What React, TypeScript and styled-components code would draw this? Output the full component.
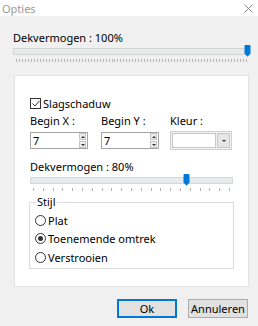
import styled, { createGlobalStyle } from "styled-components";

const GlobalStyle = createGlobalStyle`
  html, body {
    margin: 0;
    padding: 0;
    background: #f0f0f0;
  }
  body {
    font-family: "Noto Sans", "Open Sans", sans-serif;
    font-size: 11px;
    color: #000;
  }
`;

const Window = styled.div`
  width: 258px;
  height: 326px;
  display: flex;
  flex-direction: column;
  background: #f0f0f0;
  overflow: hidden;
`;

const TitleBar = styled.div`
  height: 16px;
  flex-shrink: 0;
  background: #fff;
  display: flex;
  align-items: center;
  justify-content: space-between;
  padding: 0 5px 0 2px;
  color: #9a9a9a;
  font-size: 11px;
`;

const Body = styled.div`
  display: flex;
  flex-direction: column;
  flex-shrink: 0;
  padding: 0 8px 0 13px;
`;

const Label = styled.div<{ $top?: number }>`
  margin-top: ${(p) => p.$top ?? 0}px;
  line-height: 15px;
  white-space: nowrap;
`;

const SliderWrap = styled.div`
  position: relative;
  display: flex;
  flex-direction: column;
  padding-top: 3px;
`;

const Track = styled.div`
  height: 5px;
  background: #e7eaea;
  border: 1px solid #d6d6d6;
`;

const Thumb = styled.svg`
  position: absolute;
  top: 0;
  width: 7px;
  height: 12px;
`;

const Ticks = styled.div`
  display: flex;
  justify-content: space-between;
  margin: 4px 3px 0;
  height: 3px;
`;

const Tick = styled.span`
  width: 1px;
  height: 3px;
  background: #b4b4b4;
`;

function Slider({ value, ticks }: { value: number; ticks: number }) {
  return (
    <SliderWrap>
      <Track />
      <Thumb
        viewBox="0 0 7 12"
        style={{ left: `calc(${value * 100}% - ${value * 6}px)` }}
      >
        <path d="M0.5 1 Q0.5 0 1.5 0 H5.5 Q6.5 0 6.5 1 V8.5 L3.5 11.8 L0.5 8.5 Z" fill="#0078d7" />
      </Thumb>
      <Ticks>
        {Array.from({ length: ticks }).map((_, i) => (
          <Tick key={i} />
        ))}
      </Ticks>
    </SliderWrap>
  );
}

const Panel = styled.div`
  margin: 13px 1px 0;
  background: #fff;
  border: 1px solid #e3e3e3;
  padding: 20px 15px 17px;
  display: flex;
  flex-direction: column;
`;

const CheckRow = styled.label`
  display: flex;
  align-items: center;
  gap: 2px;
  line-height: 15px;
`;

const CheckBox = styled.span`
  width: 9px;
  height: 9px;
  border: 1px solid #333;
  background: #fff;
  display: flex;
  align-items: center;
  justify-content: center;
`;

const Fields = styled.div`
  display: flex;
  margin-top: 2px;
`;

const Field = styled.div<{ $w: number; $gap?: number }>`
  width: ${(p) => p.$w}px;
  margin-right: ${(p) => p.$gap ?? 0}px;
  display: flex;
  flex-direction: column;
  gap: 4px;
`;

const SpinBox = styled.div`
  height: 17px;
  border: 1px solid #a5a5a5;
  background: #fff;
  display: flex;
  align-items: stretch;
  box-sizing: border-box;
`;

const SpinValue = styled.span`
  flex: 1;
  padding-left: 2px;
  line-height: 15px;
`;

const SpinButtons = styled.div`
  width: 7px;
  display: flex;
  flex-direction: column;
  gap: 1px;
  padding: 0 1px 0 0;
`;

const SpinBtn = styled.span`
  flex: 1;
  background: #ececec;
  border: 1px solid #c4c4c4;
  display: flex;
  align-items: center;
  justify-content: center;
`;

const Arrow = styled.span<{ $up?: boolean }>`
  width: 0;
  height: 0;
  border-left: 2px solid transparent;
  border-right: 2px solid transparent;
  ${(p) => (p.$up ? "border-bottom: 2px solid #333;" : "border-top: 2px solid #333;")}
`;

const Combo = styled.div`
  height: 19px;
  margin-top: -1px;
  border: 1px solid #cfcfcf;
  background: #f4f4f4;
  display: flex;
  gap: 1px;
  padding: 1px;
  box-sizing: border-box;
`;

const Swatch = styled.span`
  flex: 1;
  background: #fff;
  border: 1px solid #c6c6c6;
`;

const DropBtn = styled.span`
  width: 11px;
  background: #e6e6e6;
  border: 1px solid #c6c6c6;
  display: flex;
  align-items: center;
  justify-content: center;
`;

const Group = styled.div`
  position: relative;
  margin: 11px -1px 0 -1px;
  border: 1px solid #dcdcdc;
  padding: 8px 0 1px 5px;
  display: flex;
  flex-direction: column;
`;

const Legend = styled.span`
  position: absolute;
  top: -8px;
  left: 6px;
  padding: 0 1px;
  background: #fff;
  line-height: 14px;
`;

const RadioRow = styled.label`
  display: flex;
  align-items: center;
  gap: 2px;
  height: 18.5px;
  line-height: 15px;
`;

const RadioDot = styled.span<{ $on?: boolean }>`
  width: 9px;
  height: 9px;
  border: 1px solid #333;
  border-radius: 50%;
  display: flex;
  align-items: center;
  justify-content: center;
  &::after {
    content: "";
    width: 5px;
    height: 5px;
    border-radius: 50%;
    background: ${(p) => (p.$on ? "#333" : "transparent")};
  }
`;

const Buttons = styled.div`
  display: flex;
  justify-content: flex-end;
  gap: 11px;
  margin: 12px 2px 0 0;
`;

const Button = styled.button<{ $primary?: boolean }>`
  width: 60px;
  height: 19px;
  padding: 0;
  font: inherit;
  color: #000;
  background: #e1e1e1;
  border: ${(p) => (p.$primary ? "2px solid #0078d7" : "1px solid #adadad")};
  box-sizing: border-box;
`;

function Spin({ value }: { value: string }) {
  return (
    <SpinBox>
      <SpinValue>{value}</SpinValue>
      <SpinButtons>
        <SpinBtn>
          <Arrow $up />
        </SpinBtn>
        <SpinBtn>
          <Arrow />
        </SpinBtn>
      </SpinButtons>
    </SpinBox>
  );
}

export default function App() {
  return (
    <>
      <GlobalStyle />
      <Window>
        <TitleBar>
          <span>Opties</span>
          <svg width="9" height="9" viewBox="0 0 9 9">
            <path d="M0.5 0.5 L8.5 8.5 M8.5 0.5 L0.5 8.5" stroke="#888" strokeWidth="1" />
          </svg>
        </TitleBar>
        <Body>
          <Label $top={14}>Dekvermogen : 100%</Label>
          <Slider value={1} ticks={78} />
          <Panel>
            <CheckRow>
              <CheckBox>
                <svg width="8" height="7" viewBox="0 0 8 7">
                  <path d="M0.5 3.5 L3 6 L7.5 0.8" stroke="#333" strokeWidth="1" fill="none" />
                </svg>
              </CheckBox>
              Slagschaduw
            </CheckRow>
            <Fields>
              <Field $w={58} $gap={13}>
                <Label>Begin X :</Label>
                <Spin value="7" />
              </Field>
              <Field $w={58} $gap={11}>
                <Label>Begin Y :</Label>
                <Spin value="7" />
              </Field>
              <Field $w={62}>
                <Label>Kleur :</Label>
                <Combo>
                  <Swatch />
                  <DropBtn>
                    <Arrow />
                  </DropBtn>
                </Combo>
              </Field>
            </Fields>
            <Label $top={9}>Dekvermogen : 80%</Label>
            <Slider value={0.777} ticks={21} />
            <Group>
              <Legend>Stijl</Legend>
              <RadioRow>
                <RadioDot />
                Plat
              </RadioRow>
              <RadioRow>
                <RadioDot $on />
                Toenemende omtrek
              </RadioRow>
              <RadioRow>
                <RadioDot />
                Verstrooien
              </RadioRow>
            </Group>
          </Panel>
          <Buttons>
            <Button $primary>Ok</Button>
            <Button>Annuleren</Button>
          </Buttons>
        </Body>
      </Window>
    </>
  );
}
